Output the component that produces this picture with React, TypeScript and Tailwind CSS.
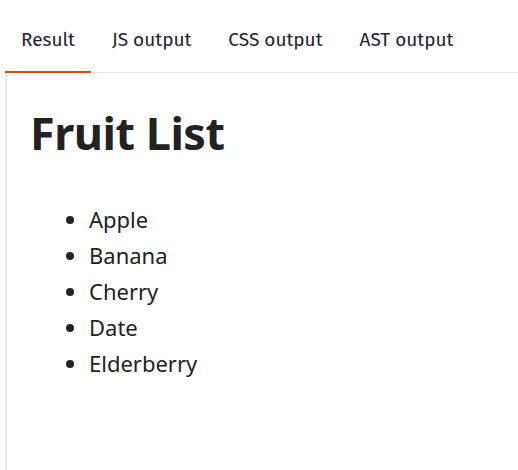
const TABS = ["Result", "JS output", "CSS output", "AST output"];
const FRUITS = ["Apple", "Banana", "Cherry", "Date", "Elderberry"];

export default function App() {
  return (
    <div className="h-[470px] w-[518px] overflow-hidden bg-white pl-[5px]">
      {/* Tabs */}
      <div className="flex h-[73px] gap-[5px] border-b border-[#e8e8e8]">
        {TABS.map((t, i) => (
          <div
            key={t}
            className={`flex items-center px-4 pt-[9px] text-[19px] text-[#1e2230] ${
              i === 0 ? "-mb-px border-b-2 border-[#d9480f]" : ""
            }`}
            style={{ fontFamily: '"Fira Sans", "Noto Sans", sans-serif' }}
          >
            {t}
          </div>
        ))}
      </div>

      {/* Result panel */}
      <div
        className="h-full border-l-2 border-[#e8e8e8] pl-[23px] text-[#222]"
        style={{ fontFamily: '"Segoe UI", "Noto Sans", sans-serif' }}
      >
        <h1 className="pt-[33px] text-[45px] font-bold leading-[1.2] tracking-[-0.5px]">
          Fruit List
        </h1>
        <ul className="mt-[41px] list-disc pl-[59px] text-[22px] leading-[36px]">
          {FRUITS.map((f) => (
            <li key={f}>{f}</li>
          ))}
        </ul>
      </div>
    </div>
  );
}
